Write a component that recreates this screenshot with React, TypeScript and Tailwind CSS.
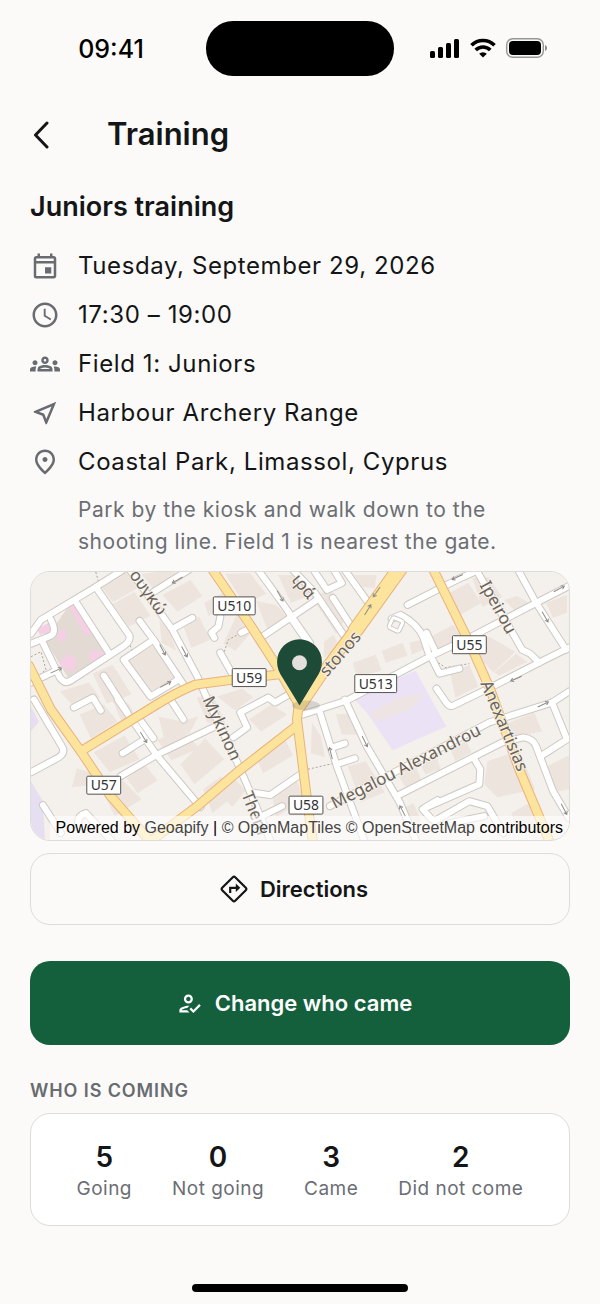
import type { ReactNode } from 'react';
import {
  MdOutlineEvent,
  MdOutlineGroups,
  MdOutlineHowToReg,
  MdOutlineNearMe,
  MdOutlinePlace,
  MdSchedule,
} from 'react-icons/md';

const DETAILS: { icon: ReactNode; text: string }[] = [
  { icon: <MdOutlineEvent size={30} />, text: 'Tuesday, September 29, 2026' },
  { icon: <MdSchedule size={30} />, text: '17:30 – 19:00' },
  { icon: <MdOutlineGroups size={30} />, text: 'Field 1: Juniors' },
  { icon: <MdOutlineNearMe size={30} />, text: 'Harbour Archery Range' },
  { icon: <MdOutlinePlace size={30} />, text: 'Coastal Park, Limassol, Cyprus' },
];

const COUNTS = [
  { value: 5, label: 'Going' },
  { value: 0, label: 'Not going' },
  { value: 3, label: 'Came' },
  { value: 2, label: 'Did not come' },
];

// Map geometry, drawn on a 540 x 269 canvas
const STREETS = [
  'M0 62 L10 48 65 15 92 -2',
  'M45 30 L78 81',
  'M65 15 L99 64 Q100 70 92 75 L40 109 Q34 113 29 106 L12 71',
  'M0 72 L20 64 Q26 60 20 48',
  'M0 111 L27 98',
  'M73 104 L96 140',
  'M109 49 L123 68 153 113',
  'M123 68 L93 88 120 125 148 108',
  'M98 -4 L142 58 167 105 178 130 207 191 220 221 240 269',
  'M142 57 L162 46',
  'M123 20 L158 -2',
  'M228 -2 L250 28 280 71',
  'M232 65 L287 28',
  'M190 45 L188 55 181 61 184 66',
  'M211 61 L219 57',
  'M190 81 L204 106',
  'M43 136 L62 126 70 139',
  'M203 166 L217 156 210 141 238 126 245 131 262 121',
  'M263 -2 L285 21 315 65',
  'M260 45 L280 74',
  'M303 26 L325 60',
  'M315 -2 L338 30',
  'M285 0 L297 18 312 11 304 -2',
  'M378 33 L427 8 447 -1',
  'M270 144 L317 129 400 85 440 66 507 31 540 14',
  'M489 -2 L507 31 537 78',
  'M447 -2 L493 78 501 82 510 91',
  'M540 76 L510 91 463 115 424 134 Q420 136 416 130 L407 117',
  'M362 47 L371 43 Q388 52 394 66 L400 85',
  'M397 61 L406 80',
  'M403 88 L410 102 430 97',
  'M315 128 L337 175 370 231 387 271',
  'M290 141 L307 195 335 271',
  'M303 176 L315 172',
  'M307 193 L325 187',
  'M367 225 L473 171 494 166 Q504 167 507 175 L524 220 540 247',
  'M445 188 L451 198 450 213 393 238 402 248',
  'M408 229 L396 236',
  'M300 235 L460 151 523 131 540 120',
  'M523 131 L538 168 513 184',
  'M405 250 L440 230 458 235 474 262',
  'M420 252 L455 245',
  'M3 128 L31 175 Q35 181 28 186 L0 201',
  'M87 128 L127 185 170 236',
  'M90 205 L127 183 183 156',
  'M92 182 L114 168',
  'M107 145 L123 167',
  'M140 128 L153 148',
  'M220 221 L240 224 272 202',
  'M12 234 L30 262',
  'M48 256 Q45 245 55 242 L82 271',
  'M232 245 L252 235',
];

const MAIN_ROADS = [
  'M181 -4 L220 53 247 95 270 135',
  'M247 103 L203 108 165 113 Q145 121 123 135 L50 180',
  'M-2 94 L20 138 50 180 80 225 122 273',
  'M119 271 L167 235 207 201 266 155',
  'M269 130 L267 148 271 180 277 228 283 272',
  'M403 -4 L440 71 461 118 490 198 521 272',
];

const PARALLEL_ROAD = 'M371 -8 L349 24 322 62 293 101 270 135';

const BLOCKS = [
  'M70 14 L96 -1 110 14 90 26 82 30Z',
  'M82 32 L104 20 120 44 98 55Z',
  'M111 2 L122 16 148 3 140 -2Z',
  'M132 23 L160 8 172 24 147 40Z',
  'M152 52 L169 45 180 68 161 76Z',
  'M194 20 L203 35 178 44 174 31Z',
  'M207 42 L219 63 205 79 193 72Z',
  'M195 2 L220 1 236 22 214 32Z',
  'M226 29 L246 33 260 48 237 57Z',
  'M248 3 L265 3 280 23 261 31Z',
  'M280 22 L303 20 317 45 306 62Z',
  'M294 70 L304 63 309 75 294 86Z',
  'M324 3 L347 3 345 16 333 15Z',
  'M420 21 L439 11 452 31 431 43Z',
  'M443 6 L459 5 473 25 453 35Z',
  'M488 24 L500 31 486 39 475 28Z',
  'M439 74 L460 65 486 80 464 101Z',
  'M465 101 L487 82 498 90 470 104Z',
  'M395 68 L424 53 434 69 405 82Z',
  'M323 91 L346 83 352 99 327 105Z',
  'M352 79 L373 71 378 84 356 91Z',
  'M380 71 L392 68 396 77 382 83Z',
  'M421 103 L440 93 449 115 426 126Z',
  'M62 102 L82 93 101 123 76 132Z',
  'M98 88 L122 74 146 105 120 120Z',
  'M129 48 L139 60 146 79 131 71Z',
  'M29 120 L58 111 69 126 42 134Z',
  'M166 126 L182 123 196 153 177 151Z',
  'M187 125 L212 117 223 126 205 139Z',
  'M49 143 L73 133 87 150 60 167Z',
  'M81 127 L98 132 107 149 94 157Z',
  'M128 145 L151 150 168 145 159 162 134 169Z',
  'M63 181 L94 164 109 188 79 201Z',
  'M46 197 L65 203 59 214 41 216Z',
  'M96 207 L115 194 127 209 107 222Z',
  'M73 222 L92 209 111 228 84 245Z',
  'M127 169 L150 157 169 177 141 189Z',
  'M150 193 L175 167 194 188 164 213Z',
  'M173 218 L191 205 205 224 182 242Z',
  'M199 203 L216 219 202 236 189 222Z',
  'M225 184 L254 166 263 184 233 202Z',
  'M219 148 L241 133 257 143 231 160Z',
  'M242 224 L266 207 274 228 246 246Z',
  'M282 151 L291 165 295 186 281 182Z',
  'M306 143 L319 142 328 163 312 163Z',
  'M318 195 L336 190 355 221 331 231Z',
  'M369 205 L386 195 392 209 376 216Z',
  'M390 192 L407 184 411 198 396 203Z',
  'M421 178 L437 170 442 181 426 190Z',
  'M458 190 L490 179 506 218 468 226 455 213Z',
  'M516 196 L540 184 540 218 525 221Z',
  'M482 242 L500 232 507 256 488 259Z',
  'M476 153 L505 141 513 160 483 166Z',
  'M517 31 L538 23 538 41 524 46Z',
  'M371 238 L384 232 392 250 379 255Z',
];

const PINK = [
  'M38 34 L43 33 58 57 54 63 48 52Z M44 33 L52 42 66 62 55 63Z',
  'M6 57 L20 50 22 60 9 63Z',
  'M25 61 L34 57 36 66 29 72Z',
  'M28 91 L37 82 46 88 42 100 33 97Z',
  'M58 79 L72 80 76 84 60 91Z',
];

// Direction arrows of the one-way streets: x, y, angle
const ARROWS = [
  [147, 8, 150],
  [250, 24, 60],
  [132, 78, 62],
  [154, 80, 62],
  [135, 113, -28],
  [113, 166, 58],
  [347, 20, 125],
  [338, 38, -58],
  [428, 5, 155],
  [516, 45, 60],
  [530, 17, -28],
  [487, 107, 157],
  [514, 133, -25],
  [335, 170, 64],
  [301, 182, -104],
  [373, 240, -118],
  [535, 238, 62],
  [25, 99, -25],
];

const STREET_NAMES = [
  { name: 'ουγκώ', x: 98, y: 3, angle: 54 },
  { name: 'ιρά', x: 261, y: 8, angle: 50 },
  { name: 'stonos', x: 297, y: 106, angle: -49 },
  { name: 'Ipeirou', x: 450, y: 13, angle: 61 },
  { name: 'Mykinon', x: 172, y: 128, angle: 65 },
  { name: 'Them', x: 211, y: 223, angle: 68 },
  { name: 'Megalou Alexandrou', x: 305, y: 238, angle: -27 },
  { name: 'Anexartisias', x: 451, y: 112, angle: 67 },
];

const SHIELDS = [
  { code: 'U510', x: 204, y: 34, w: 42 },
  { code: 'U59', x: 219, y: 106, w: 34 },
  { code: 'U55', x: 440, y: 73, w: 34 },
  { code: 'U513', x: 346, y: 112, w: 42 },
  { code: 'U57', x: 73, y: 214, w: 34 },
  { code: 'U58', x: 276, y: 234, w: 34 },
];

function StreetMap() {
  return (
    <svg
      viewBox="0 0 540 269"
      preserveAspectRatio="xMidYMid slice"
      className="block w-full"
      role="img"
      aria-label="Map of Coastal Park, Limassol"
    >
      <rect width="540" height="269" fill="#f4f0eb" />
      <path d="M14 68 L40 31 76 82 37 106Z" fill="#e2dad3" />
      {PINK.map((d) => (
        <path key={d} d={d} fill="#f5cfe3" />
      ))}
      <path d="M323 126 L386 99 417 155 363 179 337 141Z" fill="#ece2f5" />
      <path d="M340 142 L368 126 396 122 380 138 346 150Z" fill="#efe4e4" />
      <path d="M0 135 L8 150 0 160Z M0 210 L12 230 14 269 0 269Z" fill="#e6dff2" />
      {BLOCKS.map((d) => (
        <path key={d} d={d} fill="#ede4de" />
      ))}

      {/* footpaths */}
      <g fill="none" stroke="#a9a29b" strokeWidth="1" strokeDasharray="2 2">
        <path d="M194 80 L198 68 211 61" />
        <path d="M399 84 L416 96 440 92" />
        <path d="M278 198 L304 192" />
        <path d="M0 85 L10 80 15 98 8 104" />
        <path d="M65 0 L69 14 M98 70 L102 80" />
      </g>

      <g fill="none" strokeLinecap="round" strokeLinejoin="round">
        {STREETS.map((d) => (
          <path key={d} d={d} stroke="#cdc8c3" strokeWidth="8" />
        ))}
        {STREETS.map((d) => (
          <path key={d} d={d} stroke="#ffffff" strokeWidth="6" />
        ))}
        <rect x="361" y="47" width="11" height="11" rx="2" transform="rotate(25 366 52)" stroke="#cdc8c3" strokeWidth="5" />
        <rect x="361" y="47" width="11" height="11" rx="2" transform="rotate(25 366 52)" stroke="#ffffff" strokeWidth="3" />
        {MAIN_ROADS.map((d) => (
          <path key={d} d={d} stroke="#e9b27c" strokeWidth="10" />
        ))}
        <path d={PARALLEL_ROAD} stroke="#e9b27c" strokeWidth="12" />
        <path d="M372 -6 L326 58" stroke="#e9b27c" strokeWidth="16" />
        {MAIN_ROADS.map((d) => (
          <path key={d} d={d} stroke="#fce49c" strokeWidth="8" />
        ))}
        <path d={PARALLEL_ROAD} stroke="#fce49c" strokeWidth="10" />
        <path d="M372 -6 L326 58" stroke="#fce49c" strokeWidth="14" />
      </g>

      <g fill="none" stroke="#8f8a85" strokeWidth="1">
        {ARROWS.map(([x, y, angle]) => (
          <path key={`${x}-${y}`} d="M-6 0 H6 M3 -2 L6 0 3 2" transform={`translate(${x} ${y}) rotate(${angle})`} />
        ))}
      </g>

      <g
        fill="#6b625a"
        stroke="#f5f1ea"
        strokeWidth="2"
        paintOrder="stroke"
        className="font-['Noto_Sans',sans-serif] text-[17px]"
      >
        {STREET_NAMES.map((s) => (
          <text key={s.name} transform={`translate(${s.x} ${s.y}) rotate(${s.angle})`}>
            {s.name}
          </text>
        ))}
      </g>

      {SHIELDS.map((s) => (
        <g key={s.code}>
          <rect x={s.x - s.w / 2} y={s.y - 9} width={s.w} height="18" rx="1" fill="#fff" stroke="#55524f" />
          <text
            x={s.x}
            y={s.y + 5}
            textAnchor="middle"
            fill="#333"
            className="font-['Noto_Sans',sans-serif] text-[14px]"
          >
            {s.code}
          </text>
        </g>
      ))}

      {/* venue pin */}
      <ellipse cx="276" cy="134" rx="14" ry="5" fill="#000" opacity="0.12" />
      <path d="M269.500 134 L253 107 C249 101 247 96 247 90 A22.500 22.500 0 0 1 292 90 C292 96 290 101 286 107Z" fill="#1d4b37" />
      <circle cx="269.500" cy="91" r="7.500" fill="#e3dfda" />
    </svg>
  );
}

function DirectionsIcon() {
  return (
    <svg width="28" height="28" viewBox="0 0 28 28" fill="none" stroke="currentColor" strokeWidth="2.200">
      <path
        d="M12.800 2.200 L2.200 12.800 Q1 14 2.200 15.200 L12.800 25.800 Q14 27 15.200 25.800 L25.800 15.200 Q27 14 25.800 12.800 L15.200 2.200 Q14 1 12.800 2.200Z"
        strokeLinejoin="round"
      />
      <path d="M10.200 18 V12.800 H17" />
      <path d="M15.800 8.500 L20.300 12.800 15.800 17Z" fill="currentColor" stroke="none" />
    </svg>
  );
}

function StatusBar() {
  return (
    <div className="grid h-24 grid-cols-[1fr_188px_1fr] items-center">
      <span className="pt-[3px] pl-4 text-center text-[25px] font-medium text-black">09:41</span>
      <div className="h-[55px] rounded-[27px] bg-black" />
      <div className="flex items-center gap-[10px] pl-9">
        <svg width="30" height="19" viewBox="0 0 30 19">
          <rect x="0" y="12" width="5" height="7" rx="1.500" />
          <rect x="8" y="8" width="5" height="11" rx="1.500" />
          <rect x="16" y="4" width="5" height="15" rx="1.500" />
          <rect x="24" y="0" width="5" height="19" rx="1.500" />
        </svg>
        <svg width="26" height="20" viewBox="0 0 26 20" fill="none" stroke="#000" strokeWidth="3.600">
          <path d="M1.500 7.300 A16.300 16.300 0 0 1 24.500 7.300" />
          <path d="M5.700 12 A10.300 10.300 0 0 1 20.300 12" />
          <path d="M13 19.500 L9.200 15.800 A5.400 5.400 0 0 1 16.800 15.800Z" fill="#000" stroke="none" />
        </svg>
        <svg width="41" height="20" viewBox="0 0 41 20">
          <rect x="0.700" y="0.700" width="36.600" height="18.600" rx="6" fill="none" stroke="#000" strokeOpacity="0.400" strokeWidth="1.400" />
          <rect x="3" y="3" width="32" height="14" rx="4" />
          <path d="M39 7 V13 Q41 12.300 41 10 41 7.700 39 7Z" opacity="0.450" />
        </svg>
      </div>
    </div>
  );
}

export default function App() {
  return (
    <div className="min-h-screen bg-[#fbfaf8] font-['Inter',sans-serif] text-[#141517]">
      <StatusBar />

      <header className="flex h-[77px] items-center px-[30px]">
        <button type="button" aria-label="Back" className="w-[77px] pl-[3px]">
          <svg width="17" height="28" viewBox="0 0 17 28" fill="none" stroke="currentColor" strokeWidth="3">
            <path d="M14 2 L2.500 14 14 26" strokeLinecap="round" strokeLinejoin="round" />
          </svg>
        </button>
        <h1 className="text-[31px] font-semibold">Training</h1>
      </header>

      <main className="px-[30px]">
        <h2 className="pt-4 text-[27px] leading-9 font-semibold">Juniors training</h2>

        <ul className="mt-4">
          {DETAILS.map((d) => (
            <li key={d.text} className="flex h-[49px] items-center gap-[18px]">
              <span className="text-[#686b70]">{d.icon}</span>
              <span className="text-[24px] tracking-wide">{d.text}</span>
            </li>
          ))}
        </ul>
        <p className="mt-2 pl-12 text-[21px] leading-8 tracking-wide text-[#6b6e74]">
          Park by the kiosk and walk down to the shooting line. Field 1 is nearest the gate.
        </p>

        <div className="relative mt-[13px] overflow-hidden rounded-[20px] border border-[#dddcd8]">
          <StreetMap />
          <p className="absolute right-0 bottom-0 bg-white/60 px-[6px] py-[2px] font-['Liberation_Sans',sans-serif] text-[16px] leading-5 whitespace-nowrap text-black">
            Powered by <a href="#geoapify" className="text-[#444]">Geoapify</a> |{' '}
            <a href="#openmaptiles" className="text-[#444]">© OpenMapTiles</a>{' '}
            <a href="#openstreetmap" className="text-[#444]">© OpenStreetMap</a> contributors
          </p>
        </div>

        <button
          type="button"
          className="mt-3 flex h-[72px] w-full items-center justify-center gap-3 rounded-[20px] border border-[#dddcd8] pr-3 text-[22px] font-semibold"
        >
          <DirectionsIcon />
          Directions
        </button>
        <button
          type="button"
          className="mt-9 flex h-[84px] w-full items-center justify-center gap-3 rounded-[20px] bg-[#14603d] pr-3 text-[22px] font-semibold text-white"
        >
          <MdOutlineHowToReg size={27} />
          Change who came
        </button>

        <h3 className="mt-8 text-[18px] leading-7 font-semibold tracking-wider text-[#686b70]">WHO IS COMING</h3>
        <dl className="mt-2 flex h-[113px] items-center justify-center gap-10 rounded-[20px] border border-[#dddcd8] bg-white">
          {COUNTS.map((c) => (
            <div key={c.label} className="flex flex-col-reverse items-center pt-[2px]">
              <dt className="text-[19px] leading-7 tracking-wide text-[#6b6e74]">{c.label}</dt>
              <dd className="text-[28px] leading-9 font-semibold">{c.value}</dd>
            </div>
          ))}
        </dl>
      </main>

      <div className="mx-auto mt-[58px] h-2 w-[36%] rounded-full bg-black" />
    </div>
  );
}
